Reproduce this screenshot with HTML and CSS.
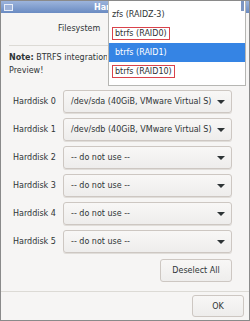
FILE: index.html
```html
<!DOCTYPE html>
<html lang="en">

<head>
    <meta charset="UTF-8">
    <title>Harddisk Setup</title>
    <link rel="stylesheet" href="styles.css">
</head>

<body>
    <div class="window">
        <div class="titlebar">
            <span class="win-icon"></span>
            <span class="title">Harddisk Setup</span>
        </div>
        <div class="content">
            <div class="fs-row">
                <span class="fs-label">Filesystem</span>
            </div>
            <hr class="sep">
            <div class="note">
                <div class="note-line"><b>Note:</b> BTRFS integration is a Technology</div>
                <div>Preview!</div>
            </div>

            <div class="disks">
                <div class="disk-row">
                    <span class="disk-label">Harddisk 0</span>
                    <div class="combo"><span>/dev/sda (40GiB, VMware Virtual S)</span><span class="arrow"></span></div>
                </div>
                <div class="disk-row">
                    <span class="disk-label">Harddisk 1</span>
                    <div class="combo"><span>/dev/sdb (40GiB, VMware Virtual S)</span><span class="arrow"></span></div>
                </div>
                <div class="disk-row">
                    <span class="disk-label">Harddisk 2</span>
                    <div class="combo"><span>-- do not use --</span><span class="arrow"></span></div>
                </div>
                <div class="disk-row">
                    <span class="disk-label">Harddisk 3</span>
                    <div class="combo"><span>-- do not use --</span><span class="arrow"></span></div>
                </div>
                <div class="disk-row">
                    <span class="disk-label">Harddisk 4</span>
                    <div class="combo"><span>-- do not use --</span><span class="arrow"></span></div>
                </div>
                <div class="disk-row">
                    <span class="disk-label">Harddisk 5</span>
                    <div class="combo"><span>-- do not use --</span><span class="arrow"></span></div>
                </div>
            </div>

            <div class="deselect-row">
                <button class="btn deselect">Deselect All</button>
            </div>
        </div>
        <div class="footer">
            <button class="btn ok">OK</button>
        </div>

        <div class="popup">
            <div class="item">zfs (RAIDZ-3)</div>
            <div class="item"><span class="mark">btrfs (RAID0)</span></div>
            <div class="item selected">btrfs (RAID1)</div>
            <div class="item"><span class="mark">btrfs (RAID10)</span></div>
            <div class="scroll"></div>
        </div>
    </div>
</body>

</html>
```

FILE: styles.css
```css
body {
    margin: 0;
    font-family: "DejaVu Sans", sans-serif;
    font-size: 8px;
    color: #2e3436;
}

.window {
    position: relative;
    width: 248px;
    height: 319px;
    border: 1px solid #8a8a8a;
    background: #f6f5f4;
    display: flex;
    flex-direction: column;
    overflow: hidden;
}

.titlebar {
    height: 12px;
    background: linear-gradient(#9cb4dc, #6a8bc2);
    display: flex;
    align-items: center;
    padding-left: 3px;
}

.win-icon {
    width: 7px;
    height: 5px;
    border: 1px solid #e8eef8;
    background: #9db2d8;
}

/* title is mostly hidden under the open popup */
.title {
    margin-left: 81px;
    width: 14px;
    overflow: hidden;
    white-space: nowrap;
    color: white;
    font-weight: bold;
}

.content {
    flex: 1;
    padding: 0 17px 0 8px;
}

.fs-row {
    height: 30px;
    display: flex;
    align-items: center;
}

.fs-label {
    margin-left: 49px;
}

.sep {
    margin: 2px 0 0;
    border: none;
    border-top: 1px solid #dcdad5;
}

.note {
    margin-top: 5px;
    line-height: 13px;
}

.note-line {
    width: 98px;
    overflow: hidden;
    white-space: nowrap;
}

.disks {
    margin-top: 13px;
    display: flex;
    flex-direction: column;
    gap: 5px;
}

.disk-row {
    display: flex;
    align-items: center;
}

.disk-label {
    width: 50px;
    padding-left: 4px;
}

.combo {
    flex: 1;
    height: 21px;
    display: flex;
    align-items: center;
    justify-content: space-between;
    padding: 0 6px 0 7px;
    border: 1px solid #cdc7c2;
    border-radius: 3px;
    background: linear-gradient(#f8f7f6, #eeedec);
    box-shadow: 0 1px 0 #e0ddd9;
}

.arrow {
    width: 0;
    height: 0;
    border-left: 4px solid transparent;
    border-right: 4px solid transparent;
    border-top: 4px solid #2e3436;
}

.deselect-row {
    margin-top: 6px;
    display: flex;
    justify-content: flex-end;
}

.btn {
    font-family: "DejaVu Sans", sans-serif;
    font-size: 8px;
    color: #2e3436;
    height: 23px;
    border: 1px solid #cdc7c2;
    border-radius: 3px;
    background: linear-gradient(#f8f7f6, #eeedec);
}

.deselect {
    width: 72px;
}

.footer {
    height: 28px;
    border-top: 1px solid #dcdad5;
    display: flex;
    justify-content: flex-end;
    align-items: center;
    padding-right: 5px;
}

.ok {
    width: 52px;
    height: 22px;
}

.popup {
    position: absolute;
    left: 107px;
    top: 0;
    width: 136px;
    height: 80px;
    background: white;
    border: 1px solid #b6b6b3;
    border-top: none;
    padding-top: 4px;
}

.item {
    height: 19px;
    display: flex;
    align-items: center;
    padding-left: 3px;
}

.mark {
    border: 1px solid #d9434b;
    padding: 1px 2px;
}

.selected {
    background: #3584e4;
    color: white;
    padding-left: 6px;
}

.scroll {
    position: absolute;
    right: 1px;
    top: 0;
    width: 3px;
    height: 10px;
    background: #7d96c2;
}
```
